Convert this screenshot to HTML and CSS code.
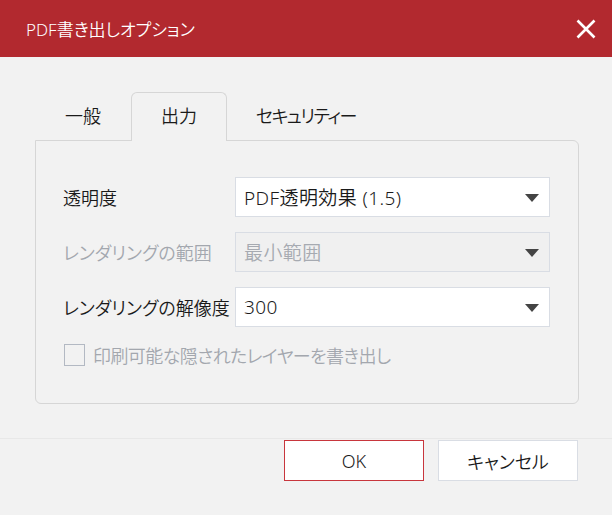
FILE: index.html
```html
<!DOCTYPE html>
<html lang="ja">
<head>
<meta charset="utf-8">
<link rel="stylesheet" href="styles.css">
</head>
<body>
<div class="dialog">
  <div class="titlebar">
    <span class="title">PDF書き出しオプション</span>
    <svg class="close" width="20" height="20" viewBox="0 0 20 20"><path d="M1.5 1.5 L18.5 18.5 M18.5 1.5 L1.5 18.5" stroke="#fff" stroke-width="2.6" fill="none"/></svg>
  </div>
  <div class="content">
    <div class="tabs">
      <div class="tab">一般</div>
      <div class="tab active">出力</div>
      <div class="tab narrow">セキュリティー</div>
    </div>
    <div class="panel">
      <div class="grid">
        <div class="label">透明度</div>
        <div class="select"><span>PDF透明効果 (1.5)</span><span class="arrow"></span></div>
        <div class="label disabled">レンダリングの範囲</div>
        <div class="select is-disabled"><span>最小範囲</span><span class="arrow"></span></div>
        <div class="label">レンダリングの解像度</div>
        <div class="select"><span>300</span><span class="arrow"></span></div>
      </div>
      <div class="check-row">
        <span class="checkbox"></span>
        <span class="check-label">印刷可能な隠されたレイヤーを書き出し</span>
      </div>
    </div>
  </div>
  <div class="footer">
    <button class="btn ok">OK</button>
    <button class="btn">キャンセル</button>
  </div>
</div>
</body>
</html>
```
FILE: styles.css
```css
* { box-sizing: border-box; }
html, body { margin: 0; padding: 0; }
body {
  width: 612px;
  height: 515px;
  background: #f2f2f2;
  font-family: "Noto Sans", "Noto Sans CJK JP", sans-serif;
  font-size: 18px;
  font-weight: 350;
  font-feature-settings: "palt";
  color: #1a1a1a;
  overflow: hidden;
}
.titlebar {
  height: 57px;
  background: #b2292f;
  display: flex;
  align-items: center;
  justify-content: space-between;
  padding: 0 16px 0 26px;
}
.title {
  color: #fff;
  font-size: 17px;
}
.close { display: block; margin-top: 0; }
.content { padding: 35px 0 0 35px; }
.tabs {
  display: flex;
  height: 48px;
}
.tab {
  padding: 0 29px;
  line-height: 46px;
  border: 1px solid transparent;
  border-bottom: none;
}
.tab.narrow { letter-spacing: -1.6px; padding-left: 28px; }
.tab.active {
  border-color: #d6d6d6;
  border-radius: 6px 6px 0 0;
  background: #f2f2f2;
  position: relative;
  z-index: 1;
  margin-bottom: -1px;
  height: 49px;
}
.panel {
  width: 544px;
  border: 1px solid #d6d6d6;
  border-radius: 0 6px 6px 6px;
  padding: 36px 28px 37px 27px;
}
.grid {
  display: grid;
  grid-template-columns: 172px 315px;
  row-gap: 15px;
  align-items: center;
}
.label { white-space: nowrap; }
.label.disabled { color: #a3a7ae; }
.select {
  height: 40px;
  background: #fff;
  border: 1px solid #d9dde4;
  display: flex;
  align-items: center;
  justify-content: space-between;
  padding: 0 10px 0 8px;
  font-size: 19px;
  letter-spacing: 0.4px;
}
.select.is-disabled {
  background: #f0f0f0;
  color: #a6aab1;
}
.arrow {
  width: 0;
  height: 0;
  border-left: 7.5px solid transparent;
  border-right: 7.5px solid transparent;
  border-top: 8px solid #444;
  margin-top: 1px;
}
.check-row {
  display: flex;
  align-items: center;
  margin-top: 17px;
  padding-left: 1px;
  height: 22px;
}
.checkbox {
  width: 21px;
  height: 22px;
  border: 1px solid #b3b9c3;
  margin-right: 8px;
  flex: none;
}
.check-label { color: #a3a7ae; white-space: nowrap; letter-spacing: -0.6px; }
.footer {
  margin-top: 34px;
  border-top: 1px solid #e8e8e8;
  display: flex;
  justify-content: flex-end;
  gap: 14px;
  padding: 1px 34px 0 0;
}
.btn {
  width: 140px;
  height: 41px;
  background: #fff;
  border: 1px solid #d9dde4;
  font-family: "Noto Sans", "Noto Sans CJK JP", sans-serif;
  font-feature-settings: "palt";
  font-weight: 350;
  font-size: 18px;
  color: #1a1a1a;
  padding: 0;
}
.btn.ok { border-color: #c8363d; }
```
